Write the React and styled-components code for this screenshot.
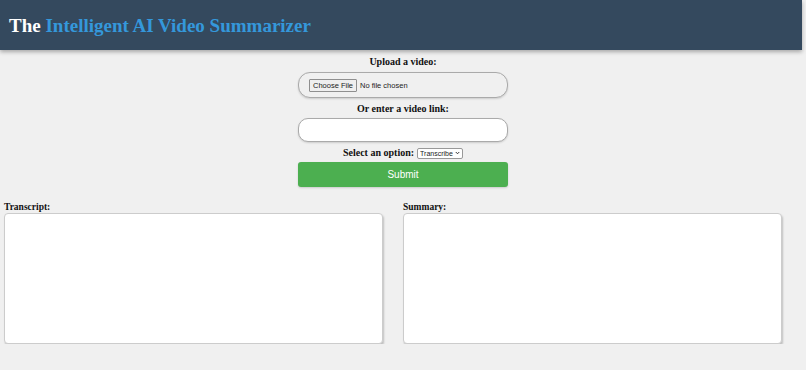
import React from 'react'
import styled, { createGlobalStyle } from 'styled-components'

const GlobalStyle = createGlobalStyle`
  html, body {
    margin: 0;
    padding: 0;
    background: #f0f0f0;
    font-family: "Liberation Serif", "Times New Roman", serif;
  }
`

const Header = styled.header`
  width: 802px;
  height: 50px;
  background: #34495e;
  box-shadow: 0 2px 4px rgba(0, 0, 0, 0.3);
  display: flex;
  align-items: center;
  padding: 2px 0 0 9px;
  box-sizing: border-box;
`

const Title = styled.h1`
  margin: 0;
  font-size: 19px;
  font-weight: bold;
  color: #ffffff;
  span {
    color: #3498db;
  }
`

const Form = styled.form`
  width: 210px;
  margin: 6px auto 0;
  display: flex;
  flex-direction: column;
  align-items: center;
`

const Label = styled.label`
  font-size: 10px;
  font-weight: bold;
  color: #111;
  line-height: 12px;
  margin: ${p => p.$top || 0}px 0 ${p => p.$bottom || 0}px;
`

const FileBox = styled.div`
  width: 100%;
  height: 26px;
  box-sizing: border-box;
  border: 1px solid #aaa;
  border-radius: 12px;
  background: #f0f0f0;
  display: flex;
  align-items: center;
  padding-left: 10px;
  box-shadow: 0 1px 2px rgba(0, 0, 0, 0.15);

  input {
    font-family: "Liberation Sans", Arial, sans-serif;
    font-size: 7.5px;
    color: #222;
  }

  input::file-selector-button {
    font-family: "Liberation Sans", Arial, sans-serif;
    font-size: 7.5px;
    height: 13px;
    padding: 0 3px;
    margin-right: 3px;
    border: 1px solid #8f8f8f;
    border-radius: 1px;
    background: #efefef;
    color: #222;
  }
`

const TextInput = styled.input`
  width: 100%;
  height: 24px;
  box-sizing: border-box;
  border: 1px solid #aaa;
  border-radius: 10px;
  background: #fff;
  box-shadow: 0 1px 2px rgba(0, 0, 0, 0.15);
  outline: none;
`

const OptionRow = styled.div`
  display: flex;
  align-items: center;
  gap: 3px;
  margin-top: 5px;
  font-size: 10px;
  font-weight: bold;
  color: #111;
  line-height: 12px;
`

const SelectWrap = styled.span`
  position: relative;
  display: inline-flex;
`

const Select = styled.select`
  appearance: none;
  font-family: "Liberation Sans", Arial, sans-serif;
  font-size: 7px;
  height: 11px;
  width: 46px;
  padding: 0 9px 0 2px;
  border: 1px solid #999;
  border-radius: 2px;
  background: #fff;
  color: #222;
`

const Chevron = styled.svg`
  position: absolute;
  right: 3px;
  top: 3.5px;
  width: 5px;
  height: 4px;
  pointer-events: none;
`

const SubmitButton = styled.button`
  width: 100%;
  height: 25px;
  margin-top: 3px;
  border: none;
  border-radius: 3px;
  background: #4caf50;
  color: #fff;
  font-family: "Liberation Sans", Arial, sans-serif;
  font-size: 10px;
  box-shadow: 0 1px 2px rgba(0, 0, 0, 0.15);
`

const Results = styled.div`
  display: grid;
  grid-template-columns: 379px 379px;
  column-gap: 20px;
  padding-left: 4px;
  margin-top: 15px;
`

const Column = styled.div`
  display: flex;
  flex-direction: column;
`

const ColumnLabel = styled.label`
  font-size: 9.5px;
  font-weight: bold;
  color: #111;
  line-height: 11px;
`

const TextArea = styled.textarea`
  width: 100%;
  height: 131px;
  box-sizing: border-box;
  border: 1px solid #ccc;
  border-radius: 4px;
  background: #fff;
  resize: none;
  box-shadow: 1px 2px 2px rgba(0, 0, 0, 0.2);
  outline: none;
`

const App = () => {
  return (
    <>
      <GlobalStyle />
      <Header>
        <Title>The <span>Intelligent AI Video Summarizer</span></Title>
      </Header>

      <Form onSubmit={e => e.preventDefault()}>
        <Label $bottom={4}>Upload a video:</Label>
        <FileBox>
          <input type="file" />
        </FileBox>

        <Label $top={5} $bottom={3}>Or enter a video link:</Label>
        <TextInput type="text" />

        <OptionRow>
          Select an option:
          <SelectWrap>
            <Select defaultValue="transcribe">
              <option value="transcribe">Transcribe</option>
              <option value="summarize">Summarize</option>
            </Select>
            <Chevron viewBox="0 0 10 8">
              <path d="M1.5 2 L5 5.5 L8.5 2" fill="none" stroke="#222" strokeWidth="1.8" />
            </Chevron>
          </SelectWrap>
        </OptionRow>

        <SubmitButton type="submit">Submit</SubmitButton>
      </Form>

      <Results>
        <Column>
          <ColumnLabel>Transcript:</ColumnLabel>
          <TextArea />
        </Column>
        <Column>
          <ColumnLabel>Summary:</ColumnLabel>
          <TextArea />
        </Column>
      </Results>
    </>
  )
}

export default App
